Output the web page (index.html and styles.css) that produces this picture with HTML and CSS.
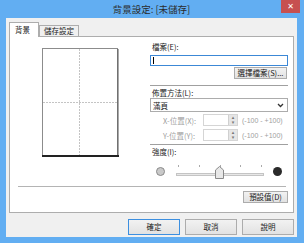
FILE: index.html
```html
<!DOCTYPE html>
<html lang="zh-Hant">
<head>
    <meta charset="UTF-8">
    <title>背景設定</title>
    <link rel="stylesheet" href="styles.css">
</head>
<body>
    <div class="window">
        <div class="titlebar">
            <span></span>
            <span class="title">背景設定: [未儲存]</span>
            <span class="close">✕</span>
        </div>

        <div class="client">
            <div class="tabs">
                <div class="tab active">背景</div>
                <div class="tab">儲存設定</div>
            </div>

            <div class="panel">
                <div class="panel-main">
                    <!-- page preview -->
                    <div class="preview-col">
                        <svg class="page" width="77" height="109" viewBox="0 0 77 109">
                            <rect x="0.5" y="0.5" width="75" height="107" fill="#fff" stroke="#8c8c8c"/>
                            <line x1="76" y1="1" x2="76" y2="109" stroke="#555"/>
                            <line x1="0" y1="108" x2="77" y2="108" stroke="#222" stroke-width="2"/>
                            <line x1="37.5" y1="1" x2="37.5" y2="107" stroke="#c4c4c4" stroke-dasharray="2 1"/>
                            <line x1="1" y1="54.5" x2="75" y2="54.5" stroke="#c4c4c4" stroke-dasharray="2 1"/>
                        </svg>
                    </div>

                    <div class="settings">
                        <div class="label">檔案(E):</div>
                        <div class="input"><span class="caret"></span></div>
                        <div class="btn-row">
                            <button class="btn browse">選擇檔案(S)...</button>
                        </div>

                        <div class="sep"></div>

                        <div class="label">佈置方法(L):</div>
                        <div class="select">
                            <span>滿頁</span>
                            <svg width="7" height="5" viewBox="0 0 7 5"><path d="M1 1 L3.5 3.5 L6 1" fill="none" stroke="#333" stroke-width="1.3"/></svg>
                        </div>

                        <div class="pos-row">
                            <span class="pos-label">X-位置(X):</span>
                            <div class="spin"><span class="spin-arrows"><i>▴</i><i>▾</i></span></div>
                            <span class="range">(-100 - +100)</span>
                        </div>
                        <div class="pos-row">
                            <span class="pos-label">Y-位置(Y):</span>
                            <div class="spin"><span class="spin-arrows"><i>▴</i><i>▾</i></span></div>
                            <span class="range">(-100 - +100)</span>
                        </div>

                        <div class="sep"></div>

                        <div class="label strength">強度(I):</div>
                        <div class="slider-row">
                            <span class="dot light"></span>
                            <div class="slider">
                                <div class="ticks">
                                    <i></i><i></i><i></i><i></i><i></i>
                                </div>
                                <div class="track"></div>
                                <svg class="thumb" width="9" height="13" viewBox="0 0 9 13">
                                    <path d="M0.5 12.5 V4 L4.5 0.5 L8.5 4 V12.5 Z" fill="#e8e8e8" stroke="#8a8a8a"/>
                                </svg>
                            </div>
                            <span class="dot dark"></span>
                        </div>
                    </div>
                </div>

                <div class="sep wide"></div>

                <div class="default-row">
                    <button class="btn">預設值(D)</button>
                </div>
            </div>

            <div class="buttons">
                <button class="btn big primary">確定</button>
                <button class="btn big">取消</button>
                <button class="btn big">說明</button>
            </div>
        </div>
    </div>
</body>
</html>
```

FILE: styles.css
```css
* {
    box-sizing: border-box;
}

body {
    margin: 0;
    font-family: "Noto Sans CJK TC", "Liberation Sans", sans-serif;
    font-size: 7.5px;
    color: #1a1a1a;
}

.window {
    width: 304px;
    height: 243px;
    background: #62aef2;
    padding: 0 7px 6px 6px;
    display: flex;
    flex-direction: column;
}

.titlebar {
    height: 18px;
    display: grid;
    grid-template-columns: 1fr auto 1fr;
    align-items: start;
}

.title {
    font-size: 9.5px;
    line-height: 18px;
    color: #2b2b2b;
}

.close {
    justify-self: end;
    width: 19px;
    height: 13px;
    margin-right: -3px;
    background: #c75050;
    color: #fff;
    font-family: "DejaVu Sans", sans-serif;
    font-size: 8px;
    font-weight: bold;
    line-height: 13px;
    text-align: center;
}

.client {
    flex: 1;
    background: #f0f0f0;
    padding: 4px 3px 0 3px;
}

/* tabs */
.tabs {
    display: flex;
    height: 14px;
    align-items: flex-end;
}

.tab {
    height: 11px;
    padding: 0 4px;
    border: 1px solid #adadad;
    border-bottom: none;
    background: #f0f0f0;
    line-height: 10px;
    white-space: nowrap;
}

.tab.active {
    height: 15px;
    width: 30px;
    margin-bottom: -1px;
    background: #fff;
    position: relative;
    z-index: 1;
    line-height: 13px;
    padding-left: 5px;
}

.panel {
    height: 177px;
    background: #fff;
    border: 1px solid #adadad;
    width: 285px;
}

.panel-main {
    display: flex;
    gap: 7px;
    padding-left: 8px;
}

.preview-col {
    width: 125px;
    display: flex;
    justify-content: center;
    padding-top: 11px;
}

.page {
    display: block;
}

.settings {
    width: 138px;
    padding-top: 5px;
}

.label {
    height: 10px;
    line-height: 10px;
    padding-left: 2px;
    white-space: nowrap;
}

.input {
    margin-top: 3px;
    height: 11px;
    border: 1px solid #3c88d6;
    padding: 1px 2px;
}

.caret {
    display: block;
    width: 1px;
    height: 7px;
    background: #000;
}

.btn-row {
    display: flex;
    justify-content: flex-end;
    margin-top: 1px;
}

.btn {
    font-family: inherit;
    font-size: 7.5px;
    color: #1a1a1a;
    background: linear-gradient(#f2f2f2, #e2e2e2);
    border: 1px solid #acacac;
    height: 12px;
    padding: 0 5px;
    line-height: 10px;
    margin: 0;
    white-space: nowrap;
}

.browse {
    width: 53px;
    padding: 0;
    margin-right: 1px;
}

.sep {
    margin-top: 6px;
    height: 1px;
    background: #a0a0a0;
}

.sep + .label {
    margin-top: 2px;
}

.select {
    height: 14px;
    border: 1px solid #acacac;
    background: #fff;
    display: flex;
    align-items: center;
    justify-content: space-between;
    padding: 0 3px 0 2px;
}

.pos-row {
    display: flex;
    align-items: center;
    height: 12px;
    margin-top: 2px;
    color: #a0a0a0;
    white-space: nowrap;
}

.pos-row + .pos-row {
    margin-top: 3px;
}

.pos-label {
    width: 53px;
    padding-left: 13px;
}

.spin {
    width: 35px;
    height: 12px;
    border: 1px solid #d5d5d5;
    display: flex;
    justify-content: flex-end;
}

.spin-arrows {
    width: 9px;
    display: flex;
    flex-direction: column;
    background: #e6e6e6;
    border-left: 1px solid #d0d0d0;
}

.spin-arrows i {
    flex: 1;
    font-style: normal;
    font-family: "DejaVu Sans", sans-serif;
    font-size: 5px;
    line-height: 5px;
    text-align: center;
    color: #777;
}

.range {
    margin-left: 4px;
    font-family: "Liberation Sans", sans-serif;
    font-size: 7px;
}

.pos-row + .sep {
    margin-top: 3px;
}

.strength {
    margin-top: 4px;
}

.slider-row {
    margin-top: 5px;
    height: 18px;
    display: flex;
    align-items: center;
    padding-left: 6px;
}

.dot {
    width: 9px;
    height: 9px;
    border-radius: 50%;
}

.dot.light {
    background: #c9c9c9;
    border: 1px solid #8a8a8a;
}

.dot.dark {
    background: #2a2a2a;
}

.slider {
    width: 88px;
    height: 18px;
    margin: 0 9px 0 11px;
    position: relative;
}

.ticks {
    display: flex;
    justify-content: space-between;
    padding: 3px 2px 0;
}

.ticks i {
    width: 1px;
    height: 2px;
    background: #aaa;
}

.track {
    margin-top: 6px;
    height: 3px;
    border: 1px solid #c4c4c4;
    background: #e7e7e7;
}

.thumb {
    position: absolute;
    left: 39px;
    top: 4px;
}

.sep.wide {
    margin: 6px 7px 0 8px;
    background: #b4b4b4;
}

.default-row {
    display: flex;
    justify-content: flex-end;
    margin-top: 4px;
    padding-right: 5px;
}

.default-row .btn {
    width: 45px;
    padding: 0;
}

.buttons {
    display: flex;
    justify-content: flex-end;
    gap: 5px;
    margin-top: 6px;
}

.btn.big {
    width: 52px;
    height: 16px;
}

.btn.primary {
    border-color: #3c8fe0;
}
```
